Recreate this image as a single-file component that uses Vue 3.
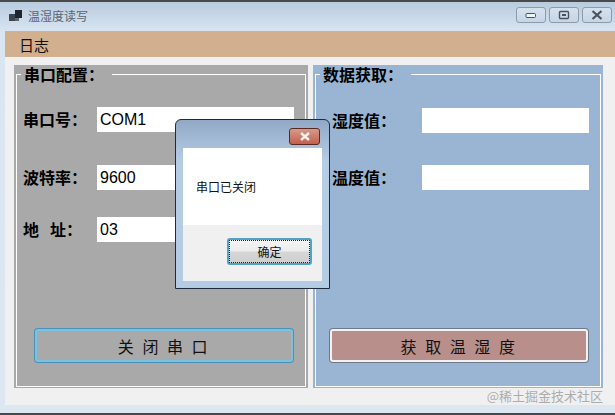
<template>
  <div class="window">
    <div class="titlebar">
      <svg class="app-icon" width="14" height="12" viewBox="0 0 14 12">
        <rect x="0" y="4" width="7" height="7" fill="#3c4650" />
        <rect x="6" y="0" width="7" height="8" fill="#1d2630" />
        <rect x="6" y="8" width="4" height="3" fill="#5c6670" />
      </svg>
      <span class="title">温湿度读写</span>
      <div class="controls">
        <div class="ctl">
          <svg width="12" height="8" viewBox="0 0 12 8"><rect x="1" y="2.5" width="9.5" height="4" rx="1" fill="#eef3f8" stroke="#4a525c" /></svg>
        </div>
        <div class="ctl">
          <svg width="12" height="10" viewBox="0 0 12 10"><rect x="1.5" y="1.5" width="9" height="7" rx="1" fill="none" stroke="#4a525c" stroke-width="1.4" /><rect x="4" y="4" width="4" height="2" fill="#4a525c" /></svg>
        </div>
        <div class="ctl">
          <svg width="12" height="10" viewBox="0 0 12 10"><path d="M1.5 1 L10.5 9 M10.5 1 L1.5 9" stroke="#4a525c" stroke-width="2.2" /></svg>
        </div>
      </div>
    </div>

    <div class="client">
      <div class="menu"><span>日志</span></div>

      <div class="panels">
        <div class="panel left">
          <fieldset class="group">
            <legend>串口配置：</legend>
            <div class="row" v-for="f in portFields" :key="f.label" :class="f.cls">
              <label>{{ f.label }}</label>
              <input class="field" :value="f.value" readonly />
            </div>
            <button class="btn btn-close">关 闭 串 口</button>
          </fieldset>
        </div>

        <div class="panel right">
          <fieldset class="group">
            <legend>数据获取：</legend>
            <div class="row data" v-for="f in dataFields" :key="f">
              <label>{{ f }}</label>
              <input class="field" readonly />
            </div>
            <button class="btn btn-get">获 取 温 湿 度</button>
          </fieldset>
        </div>
      </div>

      <div class="watermark">@稀土掘金技术社区</div>
    </div>

    <div class="dialog">
      <div class="dialog-bar">
        <div class="dialog-x">
          <svg width="12" height="9" viewBox="0 0 12 9"><path d="M2 1 L10 8 M10 1 L2 8" stroke="#f4f0ee" stroke-width="2.4" /></svg>
        </div>
      </div>
      <div class="dialog-body">
        <div class="dialog-msg">串口已关闭</div>
        <div class="dialog-foot">
          <button class="dialog-ok">确定</button>
        </div>
      </div>
    </div>
  </div>
</template>

<script setup>
const portFields = [
  { label: "串口号：", value: "COM1", cls: "r1" },
  { label: "波特率：", value: "9600", cls: "r2" },
  { label: "地   址：", value: "03", cls: "r3" },
];
const dataFields = ["湿度值：", "温度值："];
</script>

<style>
html,
body {
  margin: 0;
  background: #dce7f2;
}
</style>

<style scoped>
.window {
  position: relative;
  width: 615px;
  height: 415px;
  box-sizing: border-box;
  border-top: 2px solid #4a4a4a;
  border-bottom: 2px solid #45484c;
  background: linear-gradient(#b9cbdf 0, #d9e5f1 30px, #dce7f2 100%);
  font-family: "Noto Sans CJK SC", sans-serif;
  overflow: hidden;
  display: flex;
  flex-direction: column;
}

.titlebar {
  height: 29px;
  flex: none;
  display: flex;
  align-items: center;
  padding: 0 3px 0 9px;
}

.app-icon {
  margin-top: -2px;
}

.title {
  margin-left: 5px;
  font-size: 12px;
  color: #5a6672;
  margin-top: -2px;
}

.controls {
  margin-left: auto;
  display: flex;
  gap: 3px;
  margin-top: -3px;
}

.ctl {
  width: 30px;
  height: 16px;
  box-sizing: border-box;
  border: 1px solid #8e9bab;
  border-radius: 3px;
  display: flex;
  align-items: center;
  justify-content: center;
  background: linear-gradient(#d5e1ee, #c6d5e6);
}

.client {
  position: relative;
  margin-left: 5px;
  flex: 1;
  margin-bottom: 8px;
  background: #f0f0f0;
  display: flex;
  flex-direction: column;
}

.menu {
  height: 26px;
  flex: none;
  background: #d2af8e;
  display: flex;
  align-items: center;
  padding-left: 14px;
  font-size: 15px;
  color: #111;
}

.panels {
  display: flex;
  gap: 5px;
  margin: 8px 12px 0 9px;
  height: 323px;
}

.panel {
  box-sizing: border-box;
  padding: 0 2px 1px;
  display: flex;
}

.panel.left {
  width: 294px;
  background: #a9a9a9;
}

.panel.right {
  width: 290px;
  background: #9ab5d3;
}

.group {
  position: relative;
  flex: 1;
  min-width: 0;
  margin: 0;
  padding: 0;
  border: 1px solid #fff;
}

.group legend {
  margin-left: 4px;
  padding: 0 8px 0 3px;
  font-size: 16px;
  font-weight: 700;
  line-height: 18px;
  color: #000;
}

.row {
  display: flex;
  align-items: center;
  height: 25px;
  font-size: 16px;
  font-weight: 700;
  color: #000;
}

.row label {
  white-space: pre;
  margin-top: -2px;
}

.left .row {
  padding-left: 6px;
}

.left .row label {
  width: 74px;
}

.left .r1 {
  margin-top: 24px;
}

.left .r2 {
  margin-top: 33px;
}

.left .r3 {
  margin-top: 27px;
}

.left .field {
  width: 197px;
}

.right .row {
  padding-left: 16px;
}

.right .row label {
  width: 90px;
}

.right .field {
  width: 167px;
}

.right .data:first-of-type {
  margin-top: 25px;
}

.right .data + .data {
  margin-top: 32px;
}

.field {
  box-sizing: border-box;
  height: 25px;
  padding: 0 3px;
  border: 0;
  background: #fff;
  outline: none;
  font-family: "Liberation Sans", sans-serif;
  font-size: 16px;
  color: #000;
}

.btn {
  position: absolute;
  top: 246px;
  height: 33px;
  width: 258px;
  box-sizing: border-box;
  font-family: "Noto Sans CJK SC", sans-serif;
  font-size: 16px;
  letter-spacing: 2.5px;
  color: #111;
  border-radius: 3px;
  padding: 0;
}

.btn-close {
  left: 18px;
  background: #a9a9a9;
  border: 2px solid #79c3df;
  box-shadow: 0 0 0 1px #4c8fbb;
}

.btn-get {
  left: 14px;
  background: #b88f8b;
  border: 2px solid #f2f2f2;
  box-shadow: 0 0 0 1px #6e7a8a;
}

.watermark {
  position: absolute;
  right: 12px;
  bottom: 0;
  font-size: 13px;
  line-height: 18px;
  color: #adadad;
}

.dialog {
  position: absolute;
  left: 175px;
  top: 117px;
  width: 155px;
  height: 170px;
  box-sizing: border-box;
  padding: 0 7px 7px;
  border: 1px solid #1c2c3c;
  border-radius: 6px 6px 0 0;
  background: linear-gradient(#91a9c6, #b6cde6 25%, #b4cbe4);
  display: flex;
  flex-direction: column;
}

.dialog-bar {
  height: 28px;
  flex: none;
  display: flex;
  justify-content: flex-end;
  align-items: flex-start;
  padding-top: 8px;
  box-sizing: border-box;
}

.dialog-x {
  width: 31px;
  height: 17px;
  margin-right: 2px;
  box-sizing: border-box;
  border: 1px solid #5a2a22;
  border-radius: 3px;
  background: linear-gradient(#d69a8a, #c2604c);
  display: flex;
  align-items: center;
  justify-content: center;
}

.dialog-body {
  flex: 1;
  background: #f0f0f0;
  display: flex;
  flex-direction: column;
}

.dialog-msg {
  height: 77px;
  flex: none;
  background: #fff;
  box-sizing: border-box;
  padding: 30px 0 0 13px;
  font-size: 12px;
  line-height: 17px;
  color: #111;
}

.dialog-foot {
  flex: 1;
  display: flex;
  justify-content: flex-end;
  align-items: flex-start;
  padding: 13px 10px 0 0;
}

.dialog-ok {
  width: 85px;
  height: 27px;
  box-sizing: border-box;
  padding: 0;
  border: 2px solid #4ea3c6;
  border-radius: 3px;
  outline: 1px dotted #222;
  outline-offset: -3px;
  background: linear-gradient(#f4f4f4 0, #ececec 48%, #d6d6d6 52%, #cfcfcf 100%);
  font-family: "Noto Sans CJK SC", sans-serif;
  font-size: 12px;
  color: #111;
}
</style>
